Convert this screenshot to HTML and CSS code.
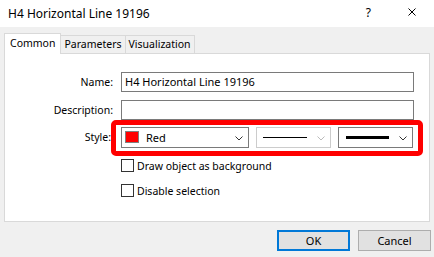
FILE: index.html
```html
<!DOCTYPE html>
<html lang="en">
<head>
    <meta charset="UTF-8">
    <title>H4 Horizontal Line 19196</title>
    <link rel="stylesheet" href="styles.css">
</head>
<body>
    <div class="titlebar">
        <span class="title">H4 Horizontal Line 19196</span>
        <span class="help">?</span>
        <svg class="close" width="8" height="8" viewBox="0 0 8 8">
            <path d="M0.5 0.5 L7.5 7.5 M7.5 0.5 L0.5 7.5" stroke="#000" stroke-width="1" fill="none"/>
        </svg>
    </div>

    <div class="tabs">
        <div class="tab active">Common</div>
        <div class="tab">Parameters</div>
        <div class="tab">Visualization</div>
    </div>

    <div class="panel">
        <div class="row">
            <span class="lbl">Name:</span>
            <div class="field">H4 Horizontal Line 19196</div>
        </div>
        <div class="row">
            <span class="lbl">Description:</span>
            <div class="field"></div>
        </div>
        <div class="row row-style">
            <span class="lbl">Style:</span>
            <div class="combo combo-color">
                <span class="swatch"></span>
                <span class="combo-text">Red</span>
                <svg class="chev" width="8" height="5" viewBox="0 0 8 5"><path d="M0.5 0.5 L4 4 L7.5 0.5" stroke="#333" fill="none"/></svg>
            </div>
            <div class="combo combo-line disabled">
                <span class="line thin"></span>
                <svg class="chev" width="8" height="5" viewBox="0 0 8 5"><path d="M0.5 0.5 L4 4 L7.5 0.5" stroke="#bbb" fill="none"/></svg>
            </div>
            <div class="combo combo-line">
                <span class="line thick"></span>
                <svg class="chev" width="8" height="5" viewBox="0 0 8 5"><path d="M0.5 0.5 L4 4 L7.5 0.5" stroke="#333" fill="none"/></svg>
            </div>
        </div>
        <div class="check-row">
            <span class="box"></span>
            <span>Draw object as background</span>
        </div>
        <div class="check-row">
            <span class="box"></span>
            <span>Disable selection</span>
        </div>

        <!-- highlight drawn over the style row -->
        <div class="highlight"></div>
    </div>

    <div class="footer">
        <div class="btn default">OK</div>
        <div class="btn">Cancel</div>
    </div>
</body>
</html>
```

FILE: styles.css
```css
body {
    margin: 0;
    width: 434px;
    height: 257px;
    background-color: #f0f0f0;
    font-family: "Segoe UI", "Noto Sans", "Liberation Sans", sans-serif;
    font-size: 10.5px;
    color: #000;
    overflow: hidden;
}

.titlebar {
    height: 27px;
    background-color: #fff;
    display: flex;
    align-items: center;
    padding-left: 8px;
    box-sizing: border-box;
    font-size: 12px;
}

.title {
    flex: 1;
}

.help {
    margin-right: 37px;
    margin-top: -3px;
}

.close {
    margin-right: 18px;
    margin-top: -3px;
}

.tabs {
    display: flex;
    align-items: flex-end;
    height: 20px;
    margin: 6px 0 0 4px;
    position: relative;
    z-index: 1;
}

.tab {
    height: 18px;
    box-sizing: border-box;
    border: 1px solid #d9d9d9;
    border-bottom: none;
    border-left: none;
    padding: 0 3px;
    line-height: 17px;
    background-color: #f0f0f0;
}

.tab.active {
    height: 21px;
    margin-bottom: -1px;
    background-color: #fff;
    border-left: 1px solid #d9d9d9;
    padding: 0 5px;
    line-height: 19px;
}

.panel {
    position: relative;
    margin-left: 4px;
    width: 426px;
    height: 169px;
    box-sizing: border-box;
    background-color: #fff;
    border: 1px solid #d9d9d9;
    padding: 18px 15px 0 0;
}

.row {
    display: flex;
    align-items: center;
    height: 20px;
    margin-bottom: 8px;
}

.row-style {
    margin-top: -1px;
    margin-bottom: 12px;
}

.lbl {
    width: 108px;
    margin-right: 8px;
    text-align: right;
    flex-shrink: 0;
}

.row-style .lbl {
    width: 106px;
    margin-right: 10px;
}

.field {
    flex: 1;
    height: 20px;
    box-sizing: border-box;
    border: 1px solid #7a7a7a;
    padding-left: 3px;
    line-height: 18px;
    font-size: 11px;
    white-space: nowrap;
}

.combo {
    position: relative;
    height: 21px;
    box-sizing: border-box;
    border: 1px solid #7a7a7a;
    display: flex;
    align-items: center;
    margin-right: 7px;
}

.combo.disabled {
    border-color: #cccccc;
}

.combo-color {
    width: 128px;
    padding-left: 3px;
}

.combo-line {
    width: 75px;
    padding-left: 6px;
}

.combo-line:last-child {
    margin-right: 0;
}

.swatch {
    width: 14px;
    height: 12px;
    box-sizing: border-box;
    background-color: #ff0000;
    border: 1px solid #808080;
    margin-right: 7px;
}

.combo-text {
    flex: 1;
    font-size: 11px;
}

.line {
    width: 44px;
    background-color: #000;
    flex-shrink: 0;
}

.line.thin {
    height: 1px;
}

.line.thick {
    height: 3px;
    width: 43px;
    margin-left: 1px;
}

.chev {
    position: absolute;
    right: 5px;
    top: 8px;
}

.check-row {
    display: flex;
    align-items: center;
    height: 13px;
    margin-left: 116px;
    margin-bottom: 12px;
}

.box {
    width: 13px;
    height: 13px;
    box-sizing: border-box;
    border: 1px solid #333;
    margin-right: 3px;
}

.highlight {
    position: absolute;
    left: 106px;
    top: 66px;
    width: 312px;
    height: 36px;
    box-sizing: border-box;
    border: 5px solid #ff0000;
    border-radius: 5px;
}

.footer {
    display: flex;
    justify-content: flex-end;
    margin-top: 8px;
    padding-right: 3px;
}

.btn {
    width: 73px;
    height: 21px;
    box-sizing: border-box;
    border: 1px solid #adadad;
    background-color: #e1e1e1;
    text-align: center;
    line-height: 19px;
    margin-left: 8px;
    font-size: 11px;
}

.btn.default {
    border: 2px solid #0078d7;
    line-height: 17px;
}
```
